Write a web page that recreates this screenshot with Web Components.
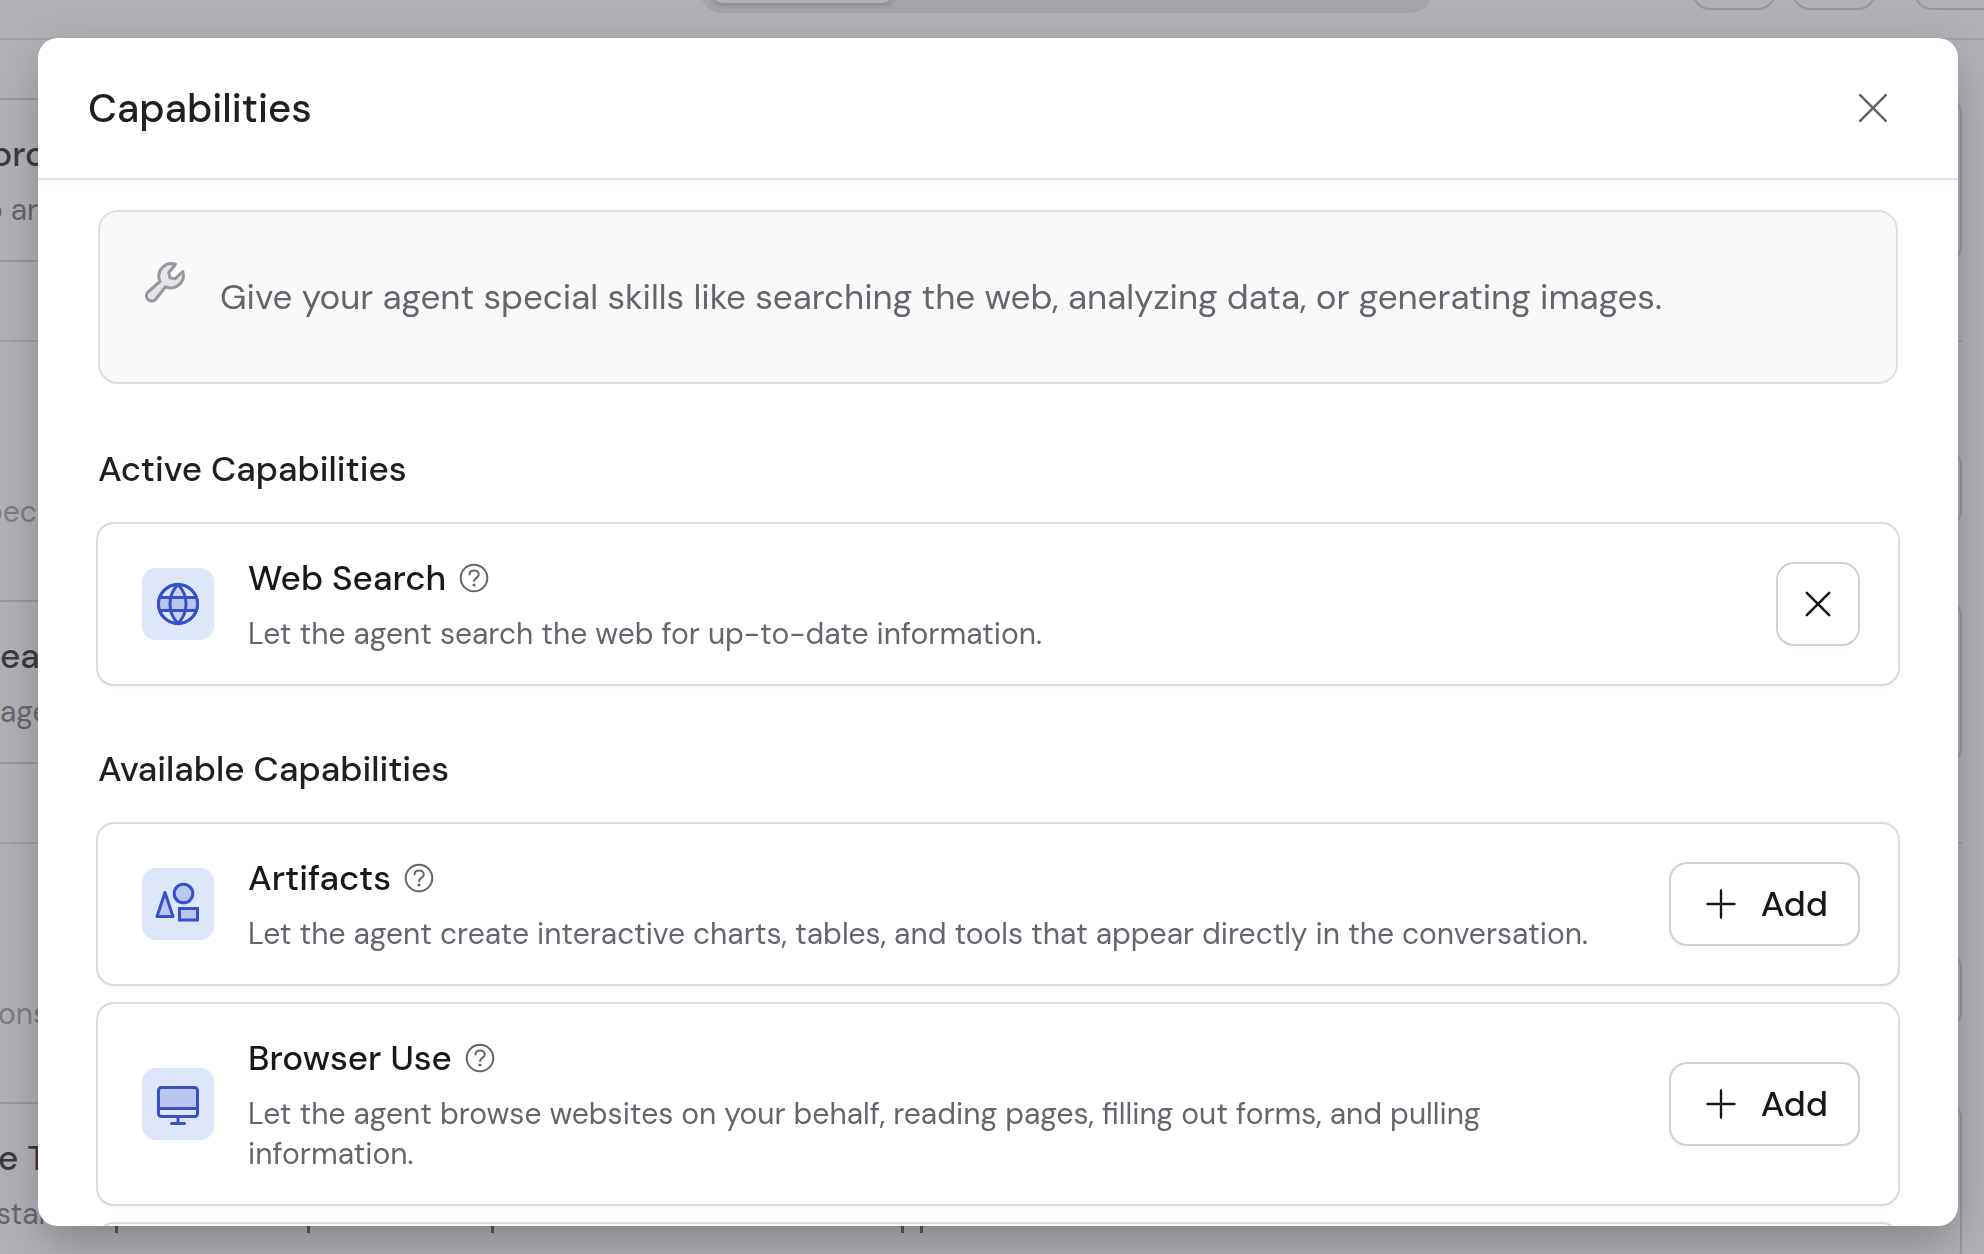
<!DOCTYPE html>
<html lang="en">
<head>
<meta charset="utf-8">
<title>Capabilities</title>
<style>
  html, body { margin: 0; height: 100%; overflow: hidden; }
  body {
    background: #b1b0b6;
    color: #18181b;
    font-family: "DM Sans", Inter, "Liberation Sans", sans-serif;
    --ring: #dadada;
    --muted: #65656d;
    --accent: #3451c8;
    --accent-soft: #bcc7ef;
    --tile: #dee6f9;
  }
</style>
</head>
<body>
<app-backdrop></app-backdrop>
<modal-dialog heading="Capabilities">
  <info-banner>Give your agent special skills like searching the web, analyzing data, or generating images.</info-banner>
  <capability-section heading="Active Capabilities">
    <capability-card name="Web Search" icon="globe" action="remove">Let the agent search the web for up-to-date information.</capability-card>
  </capability-section>
  <capability-section heading="Available Capabilities">
    <capability-card name="Artifacts" icon="shapes" action="add">Let the agent create interactive charts, tables, and tools that appear directly in the conversation.</capability-card>
    <capability-card name="Browser Use" icon="monitor" action="add">Let the agent browse websites on your behalf, reading pages, filling out forms, and pulling information.</capability-card>
    <capability-card icon="none"></capability-card>
  </capability-section>
</modal-dialog>

<script>
const ICONS = {
  none: '',
  globe: `<svg width="48" height="48" viewBox="0 0 48 48" fill="none" stroke="currentColor" stroke-width="3">
    <circle cx="24" cy="24" r="19.5" fill="var(--tile)"/>
    <path d="M5.5 17.5h37v13h-37a20 20 0 0 1 0-13z" fill="var(--accent-soft)" stroke="none"/>
    <path d="M24 4.500c-5 5-8 12-8 19.500s3 14.500 8 19.500c5-5 8-12 8-19.500s-3-14.500-8-19.500z" fill="var(--accent-soft)" fill-opacity=".6"/>
    <path d="M5.500 17.500h37M5.500 30.500h37"/><circle cx="24" cy="24" r="19.500"/></svg>`,
  shapes: `<svg width="48" height="48" viewBox="0 0 48 48" fill="var(--accent-soft)" stroke="currentColor" stroke-width="3" stroke-linejoin="round">
    <path d="M11 12.500 3 36.500h16z"/><circle cx="29.500" cy="13.500" r="9.300"/><path d="M25.500 28.500h18v11.500h-18z" stroke-linejoin="miter"/></svg>`,
  monitor: `<svg width="48" height="48" viewBox="0 0 48 48" fill="none" stroke="currentColor" stroke-width="3" stroke-linecap="round" stroke-linejoin="round">
    <path d="M4.500 28V10a3 3 0 0 1 3-3h33a3 3 0 0 1 3 3v18z" fill="var(--accent-soft)" stroke="none"/>
    <rect x="4.500" y="7.500" width="39" height="29" rx="3"/><path d="M5 28.500h38M24 37v6M17.500 43.500h13"/></svg>`
};

function define(name, render) {
  customElements.define(name, class extends HTMLElement {
    constructor() {
      super();
      this.attachShadow({ mode: 'open' }).innerHTML = render(this);
    }
  });
}

/* Dimmed settings page behind the dialog */
define('app-backdrop', () => `
  <style>
    :host { display: flex; flex-direction: column; height: 100vh; overflow: hidden; }
    .bar { display: flex; justify-content: flex-end; align-items: flex-end; height: 38px; border-bottom: 2px solid #a3a2a8; }
    .track { width: 730px; height: 60px; margin-bottom: 25px; margin-right: 261px; border-radius: 20px; background: #a5a4aa; display: flex; align-items: flex-end; box-sizing: border-box; padding: 0 10px 10px; flex: none; }
    .thumb { width: 183px; height: 40px; border-radius: 12px; background: #b1b0b6; box-shadow: 0 3px 5px #8e8d93; }
    .pill { width: 80px; height: 60px; margin: 0 16px 28px 0; border: 2px solid #97969c; border-radius: 18px; flex: none; }
    .wide { width: 92px; margin-left: 22px; margin-right: -26px; }
    .list { margin-top: 58px; }
  </style>
  <div class="bar"><div class="track"><div class="thumb"></div></div><div class="pill"></div><div class="pill"></div><div class="pill wide"></div></div>
  <div class="list">
    <backdrop-item label="pro" note="o ar" hint="pec" style="--a:-10px;--b:-15px;--c:-16px"></backdrop-item>
    <backdrop-item label="ea" note="age" hint="ons" style="--a:0px;--b:0px;--c:-2px"></backdrop-item>
    <backdrop-item label="e T" note="stan" ticks style="--a:-2px;--b:-4px"></backdrop-item>
  </div>`);

define('backdrop-item', el => `
  <style>
    :host { display: block; height: 502px; margin-right: 22px; white-space: nowrap; }
    .card { box-sizing: border-box; height: 164px; padding: 30px 0; border: 2px solid #99989e; border-left: 0; border-radius: 0 16px 16px 0; }
    .title { font-size: 35px; line-height: 48px; font-weight: 500; color: #3b3b40; text-indent: var(--a); }
    .note { display: flex; align-items: flex-end; margin-top: 12px; font-size: 30px; line-height: 40px; color: #66656c; text-indent: var(--b); }
    .rule { margin-top: 78px; height: 2px; background: #9f9ea4; }
    .hint { box-sizing: border-box; height: 76px; margin-top: 108px; border: 2px solid #96959b; border-width: 0 2px 0 0; border-radius: 0 16px 16px 0; font-size: 30px; line-height: 124px; color: #7d7c83; text-indent: var(--c); }
    svg { position: absolute; left: 0; }
  </style>
  <div class="card"><div class="title">${el.getAttribute('label')}</div>
  <div class="note">${el.getAttribute('note')}${el.hasAttribute('ticks') ? '<svg width="940" height="8" fill="#57565c"><path d="M115 0h3v7h-3zM307 0h3v7h-3zM491 0h3v7h-3zM901 0h3v7h-3zM920 0h3v7h-3z"/></svg>' : ''}</div></div>
  ${el.hasAttribute('hint') ? `<div class="rule"></div><div class="hint">${el.getAttribute('hint')}</div>` : ''}`);

define('modal-dialog', el => `
  <style>
    :host { position: fixed; inset: 0; display: flex; box-sizing: border-box; padding: 38px 26px 28px 38px; }
    section { flex: 1; min-width: 0; display: flex; flex-direction: column; overflow: hidden; border-radius: 20px; background: #fff; box-shadow: 0 24px 48px -8px rgba(0,0,0,.22), 0 4px 40px rgba(0,0,0,.08); }
    header { flex: none; display: flex; align-items: center; justify-content: space-between; height: 140px; padding: 0 50px; border-bottom: 2px solid #dfdfe0; box-shadow: 0 2px 6px rgba(0,0,0,.06); }
    h1 { margin: 0; font-size: 40px; line-height: 50px; font-weight: 500; color: #202022; }
    button { display: grid; place-items: center; width: 70px; height: 70px; padding: 0; border: 0; background: none; color: #65656d; }
    .body { flex: 1; min-height: 0; overflow: hidden; display: flex; flex-direction: column; gap: 60px; padding: 30px 60px 0; }
  </style>
  <section role="dialog" aria-labelledby="t">
    <header><h1 id="t">${el.getAttribute('heading')}</h1>
      <button type="button" aria-label="Close"><svg width="32" height="32" viewBox="0 0 32 32" stroke="currentColor" stroke-width="2.600" stroke-linecap="round"><path d="M3.200 3.200l25.600 25.600M28.800 3.200 3.200 28.800"/></svg></button></header>
    <div class="body"><slot></slot></div>
  </section>`);

define('info-banner', () => `
  <style>
    :host { flex: none; display: flex; gap: 32px; box-sizing: border-box; padding: 46px 44px; border: 2px solid #dfdfe0; border-radius: 20px; background: #f9f9f9; color: var(--muted); }
    svg { flex: none; color: #97979f; margin-top: 2px; }
    p { margin: 14px 0; font-size: 35px; line-height: 50px; }
  </style>
  <svg width="44" height="44" viewBox="0 0 44 44" fill="#e6e6e8" stroke="currentColor" stroke-width="3" stroke-linejoin="round">
    <path d="M31.500 4.200A12.700 12.700 0 0 0 16 21.500L4 32a5 5 0 0 0 7.500 7.500L21.500 26.800A12.700 12.700 0 0 0 38.800 11.500L31 18.800l-5.200-1-1-5.300z"/></svg>
  <p><slot></slot></p>`);

define('capability-section', el => `
  <style>
    :host { flex: none; display: block; }
    h2 { margin: 0 0 30px; font-size: 35px; line-height: 50px; font-weight: 500; color: #202022; }
    .cards { display: flex; flex-direction: column; gap: 20px; }
  </style>
  <h2>${el.getAttribute('heading')}</h2>
  <div class="cards"><slot></slot></div>`);

define('capability-card', el => {
  const action = el.getAttribute('action');
  const name = el.getAttribute('name');
  return `
  <style>
    :host { display: flex; align-items: center; box-sizing: border-box; min-height: 160px; padding: 30px 40px 30px 44px; border-radius: 16px; background: #fff; box-shadow: 0 0 0 2px var(--ring), 0 3px 4px rgba(0,0,0,.05); }
    .tile { flex: none; display: grid; place-items: center; width: 72px; height: 72px; margin-right: 34px; border-radius: 14px; background: var(--tile); color: var(--accent); }
    .text { flex: 1; min-width: 0; margin-right: 40px; }
    .name { display: flex; align-items: center; gap: 12px; }
    h3 { margin: 0; font-size: 35px; line-height: 48px; font-weight: 500; }
    p { margin: 12px 0 0; font-size: 30px; line-height: 40px; color: var(--muted); }
    button { flex: none; display: flex; align-items: center; justify-content: center; gap: 20px; min-width: 80px; height: 80px; padding: 0; border: 0; border-radius: 16px; background: #fff; color: #18181b; font-family: inherit; font-size: 35px; line-height: 48px; font-weight: 500; box-shadow: 0 0 0 2px #cfcfd6, 0 3px 4px rgba(0,0,0,.04); }
    .add { padding: 0 30px; }
    .help { min-width: 0; height: 32px; padding: 0; box-shadow: none; color: #65656d; }
  </style>
  ${name ? `<div class="tile">${ICONS[el.getAttribute('icon')]}</div>
  <div class="text">
    <div class="name"><h3>${name}</h3>
      <button class="help" type="button" aria-label="About ${name}"><svg width="32" height="32" viewBox="0 0 32 32" fill="none" stroke="currentColor" stroke-width="2"><circle cx="16" cy="16" r="13.300"/><path d="M11.500 12.600c0-2.700 2-4.200 4.600-4.200s4.700 1.600 4.700 4c0 3.600-4.700 3.400-4.700 6.600" stroke-linecap="round"/><circle cx="16" cy="23" r="1.600" fill="currentColor" stroke="none"/></svg></button></div>
    <p><slot></slot></p>
  </div>` : ''}
  ${action === 'remove' ? `<button type="button" aria-label="Remove ${name}"><svg width="28" height="28" viewBox="0 0 28 28" stroke="currentColor" stroke-width="2.600" stroke-linecap="round"><path d="M2.800 2.800l22.400 22.400M25.200 2.800 2.800 25.200"/></svg></button>` : ''}
  ${action === 'add' ? `<button class="add" type="button"><svg width="40" height="40" viewBox="0 0 40 40" stroke="currentColor" stroke-width="2.400" stroke-linecap="round"><path d="M20 6.500v27M6.500 20h27"/></svg><span>Add</span></button>` : ''}`;
});
</script>
</body>
</html>
